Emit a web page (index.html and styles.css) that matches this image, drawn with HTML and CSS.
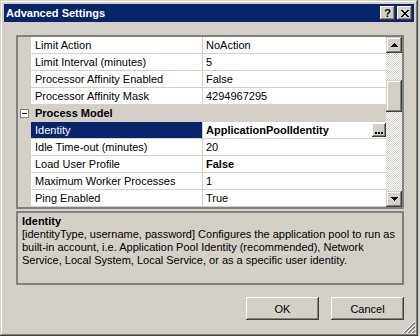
FILE: index.html
```html
<!DOCTYPE html>
<html>
<head>
<meta charset="utf-8">
<title>Advanced Settings</title>
<link rel="stylesheet" href="styles.css">
</head>
<body>
<div class="window">
  <div class="titlebar">
    <span class="title">Advanced Settings</span>
    <div class="caption">
      <span class="cap-btn help-q">?</span>
      <span class="cap-btn">
        <svg width="8" height="7" viewBox="0 0 8 7" shape-rendering="crispEdges"><g fill="#000">
          <rect x="0" y="0" width="2" height="1"/><rect x="6" y="0" width="2" height="1"/>
          <rect x="1" y="1" width="2" height="1"/><rect x="5" y="1" width="2" height="1"/>
          <rect x="2" y="2" width="4" height="1"/>
          <rect x="3" y="3" width="2" height="1"/>
          <rect x="2" y="4" width="4" height="1"/>
          <rect x="1" y="5" width="2" height="1"/><rect x="5" y="5" width="2" height="1"/>
          <rect x="0" y="6" width="2" height="1"/><rect x="6" y="6" width="2" height="1"/>
        </g></svg>
      </span>
    </div>
  </div>

  <div class="content">
    <div class="grid">
      <div class="rows">
        <div class="row"><div class="gutter"></div><div class="name">Limit Action</div><div class="value">NoAction</div></div>
        <div class="row"><div class="gutter"></div><div class="name">Limit Interval (minutes)</div><div class="value">5</div></div>
        <div class="row"><div class="gutter"></div><div class="name">Processor Affinity Enabled</div><div class="value">False</div></div>
        <div class="row"><div class="gutter"></div><div class="name">Processor Affinity Mask</div><div class="value">4294967295</div></div>
        <div class="row category"><div class="gutter"><span class="toggle"></span></div><div class="cat">Process Model</div></div>
        <div class="row selected"><div class="gutter"></div><div class="name">Identity</div><div class="value"><span class="bold">ApplicationPoolIdentity</span><span class="ellipsis"><svg width="8" height="2" viewBox="0 0 8 2" shape-rendering="crispEdges"><g fill="#000"><rect x="0" y="0" width="2" height="2"/><rect x="3" y="0" width="2" height="2"/><rect x="6" y="0" width="2" height="2"/></g></svg></span></div></div>
        <div class="row"><div class="gutter"></div><div class="name">Idle Time-out (minutes)</div><div class="value">20</div></div>
        <div class="row"><div class="gutter"></div><div class="name">Load User Profile</div><div class="value"><span class="bold">False</span></div></div>
        <div class="row"><div class="gutter"></div><div class="name">Maximum Worker Processes</div><div class="value">1</div></div>
        <div class="row"><div class="gutter"></div><div class="name">Ping Enabled</div><div class="value">True</div></div>
      </div>
      <div class="vscroll">
        <div class="sb-btn">
          <svg width="7" height="4" viewBox="0 0 7 4" shape-rendering="crispEdges"><path d="M3 0h1v1h1v1h1v1h1v1H0V3h1V2h1V1h1z" fill="#000"/></svg>
        </div>
        <div class="sb-track"><div class="sb-thumb"></div></div>
        <div class="sb-btn">
          <svg width="7" height="4" viewBox="0 0 7 4" shape-rendering="crispEdges"><path d="M0 0h7v1H6v1H5v1H4v1H3V3H2V2H1V1H0z" fill="#000"/></svg>
        </div>
      </div>
    </div>

    <div class="help">
      <div class="help-title">Identity</div>
      <div class="help-text">[identityType, username, password] Configures the application pool to run as<br>built-in account, i.e. Application Pool Identity (recommended), Network<br>Service, Local System, Local Service, or as a specific user identity.</div>
    </div>

    <div class="buttons">
      <button class="btn">OK</button>
      <button class="btn">Cancel</button>
    </div>
  </div>

  <svg class="grip" width="12" height="12" viewBox="0 0 12 12" shape-rendering="crispEdges">
    <g stroke-width="1">
      <path d="M12 0L0 12" stroke="#fff"/>
      <path d="M12 1L1 12" stroke="#808080"/>
      <path d="M12 2L2 12" stroke="#808080"/>
      <path d="M12 4L4 12" stroke="#fff"/>
      <path d="M12 5L5 12" stroke="#808080"/>
      <path d="M12 6L6 12" stroke="#808080"/>
      <path d="M12 8L8 12" stroke="#fff"/>
      <path d="M12 9L9 12" stroke="#808080"/>
      <path d="M12 10L10 12" stroke="#808080"/>
    </g>
  </svg>
</div>
</body>
</html>
```

FILE: styles.css
```css
html, body {
  margin: 0;
  padding: 0;
  background: #d4d0c8;
}

body {
  font-family: "Liberation Sans", Arial, sans-serif;
  font-size: 11px;
  color: #000;
}

.window {
  position: relative;
  width: 418px;
  height: 336px;
  box-sizing: border-box;
  padding: 4px;
  background: #d4d0c8;
  box-shadow: inset -1px -1px #404040, inset 1px 1px #d4d0c8, inset -2px -2px #808080, inset 2px 2px #fff;
  display: flex;
  flex-direction: column;
}

.titlebar {
  height: 18px;
  flex: none;
  background: #0a246a;
  display: flex;
  align-items: center;
  justify-content: space-between;
  padding: 0 2px 0 2px;
}

.title {
  color: #fff;
  font-weight: bold;
  line-height: 18px;
}

.caption {
  display: flex;
  gap: 2px;
}

.cap-btn {
  width: 15px;
  height: 14px;
  box-sizing: border-box;
  background: #d4d0c8;
  box-shadow: inset -1px -1px #404040, inset 1px 1px #fff, inset -2px -2px #808080, inset 2px 2px #d4d0c8;
  display: flex;
  align-items: center;
  justify-content: center;
}

.help-q {
  font-weight: bold;
  font-size: 11px;
  line-height: 14px;
  padding-bottom: 1px;
}

.content {
  flex: 1;
  display: flex;
  flex-direction: column;
  padding: 13px 10px 0 12px;
}

.grid {
  height: 174px;
  flex: none;
  box-sizing: border-box;
  border: 2px solid #808080;
  background: #fff;
  display: flex;
}

.rows {
  flex: 1;
  display: flex;
  flex-direction: column;
  min-width: 0;
}

.row {
  display: flex;
  height: 17px;
  flex: none;
  box-sizing: border-box;
  border-bottom: 1px solid #d4d0c8;
  line-height: 16px;
  white-space: nowrap;
}

.gutter {
  width: 13px;
  flex: none;
  background: #d4d0c8;
  display: flex;
  align-items: center;
}

.name {
  width: 172px;
  flex: none;
  box-sizing: border-box;
  border-right: 1px solid #d4d0c8;
  padding-left: 4px;
  overflow: hidden;
}

.value {
  flex: 1;
  padding-left: 3px;
  display: flex;
  justify-content: space-between;
  align-items: stretch;
}

.bold {
  font-weight: bold;
}

.selected .name {
  background: #0a246a;
  color: #fff;
}

.category {
  background: #d4d0c8;
}

.cat {
  font-weight: bold;
  padding-left: 4px;
}

.toggle {
  position: relative;
  width: 9px;
  height: 9px;
  box-sizing: border-box;
  margin-left: 2px;
  border: 1px solid #808080;
  background: #fff;
}

.toggle::after {
  content: "";
  position: absolute;
  left: 1px;
  top: 3px;
  width: 5px;
  height: 1px;
  background: #000;
}

.ellipsis {
  width: 14px;
  height: 14px;
  margin-top: 1px;
  box-sizing: border-box;
  background: #d4d0c8;
  box-shadow: inset -1px -1px #404040, inset 1px 1px #fff, inset -2px -2px #808080;
  display: flex;
  align-items: flex-end;
  justify-content: center;
  padding-bottom: 3px;
}

.vscroll {
  width: 16px;
  flex: none;
  display: flex;
  flex-direction: column;
}

.sb-btn {
  height: 16px;
  flex: none;
  box-sizing: border-box;
  background: #d4d0c8;
  box-shadow: inset -1px -1px #404040, inset 1px 1px #d4d0c8, inset -2px -2px #808080, inset 2px 2px #fff;
  display: flex;
  align-items: center;
  justify-content: center;
}

.sb-track {
  flex: 1;
  background: repeating-conic-gradient(#d4d0c8 0 25%, #fff 0 50%) 0 0 / 2px 2px;
}

.sb-thumb {
  margin-top: 27px;
  height: 32px;
  background: #d4d0c8;
  box-shadow: inset -1px -1px #404040, inset 1px 1px #d4d0c8, inset -2px -2px #808080, inset 2px 2px #fff;
}

.help {
  margin-top: 2px;
  height: 74px;
  flex: none;
  box-sizing: border-box;
  border: 2px solid #808080;
  padding: 2px 4px;
  line-height: 13px;
  white-space: nowrap;
}

.help-title {
  font-weight: bold;
}

.buttons {
  margin-top: 12px;
  display: flex;
  justify-content: flex-end;
  gap: 12px;
}

.btn {
  width: 73px;
  height: 23px;
  box-sizing: border-box;
  border: none;
  padding: 0;
  margin: 0;
  font-family: "Liberation Sans", Arial, sans-serif;
  font-size: 11px;
  color: #000;
  background: #d4d0c8;
  box-shadow: inset -1px -1px #404040, inset 1px 1px #fff, inset -2px -2px #808080, inset 2px 2px #d4d0c8;
}

.grip {
  position: absolute;
  right: 3px;
  bottom: 3px;
}
```
